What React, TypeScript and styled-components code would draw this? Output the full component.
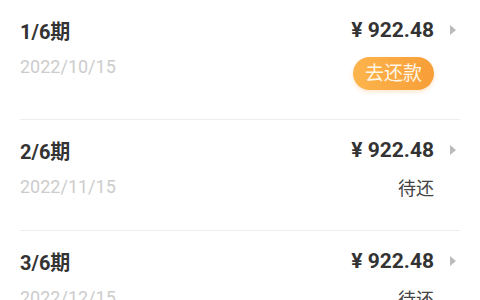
import React from "react";
import styled, { createGlobalStyle } from "styled-components";

const Global = createGlobalStyle`
  html, body { margin: 0; padding: 0; background: #fff; }
  body { font-family: Roboto, "Noto Sans CJK SC", sans-serif; }
`;

const List = styled.div`
  display: flex;
  flex-direction: column;
  padding: 0 20px;
`;

const Row = styled.div`
  display: flex;
  justify-content: space-between;
  padding: 18px 0 29px;
  border-bottom: 1px solid #eeeeee;
`;

const Left = styled.div`
  display: flex;
  flex-direction: column;
  padding-top: 2px;
`;

const Title = styled.div`
  font-size: 20px;
  line-height: 24px;
  font-weight: 700;
  color: #333;
`;

const DateText = styled.div`
  margin-top: 12px;
  font-size: 18px;
  line-height: 22px;
  color: #cccccc;
`;

const Right = styled.div`
  display: flex;
  flex-direction: column;
  align-items: flex-end;
`;

const AmountLine = styled.div`
  display: flex;
  align-items: center;
  height: 24px;
`;

const Amount = styled.div`
  font-size: 21px;
  line-height: 24px;
  font-weight: 700;
  color: #333;
  margin-right: 16px;
`;

const Arrow = styled.span`
  width: 0;
  height: 0;
  border-top: 5px solid transparent;
  border-bottom: 5px solid transparent;
  border-left: 6px solid #bbbbbb;
  margin-right: 4px;
`;

const StatusArea = styled.div`
  margin-top: 15px;
  margin-right: 26px;
`;

const PayButton = styled.div`
  height: 33px;
  padding: 0 12px;
  border-radius: 17px;
  background: linear-gradient(90deg, #fdb44c, #f79e38);
  color: #fff6e6;
  font-size: 19px;
  line-height: 33px;
  box-shadow: 0 2px 4px rgba(247, 158, 56, 0.25);
`;

const Status = styled.div`
  font-size: 18px;
  line-height: 24px;
  color: #444;
`;

const items = [
  { period: "1/6期", date: "2022/10/15", amount: "¥ 922.48", pay: true },
  { period: "2/6期", date: "2022/11/15", amount: "¥ 922.48", pay: false },
  { period: "3/6期", date: "2022/12/15", amount: "¥ 922.48", pay: false },
];

export default function App() {
  return (
    <>
      <Global />
      <List>
        {items.map((it) => (
          <Row key={it.period}>
            <Left>
              <Title>{it.period}</Title>
              <DateText>{it.date}</DateText>
            </Left>
            <Right>
              <AmountLine>
                <Amount>{it.amount}</Amount>
                <Arrow />
              </AmountLine>
              <StatusArea>
                {it.pay ? <PayButton>去还款</PayButton> : <Status>待还</Status>}
              </StatusArea>
            </Right>
          </Row>
        ))}
      </List>
    </>
  );
}
